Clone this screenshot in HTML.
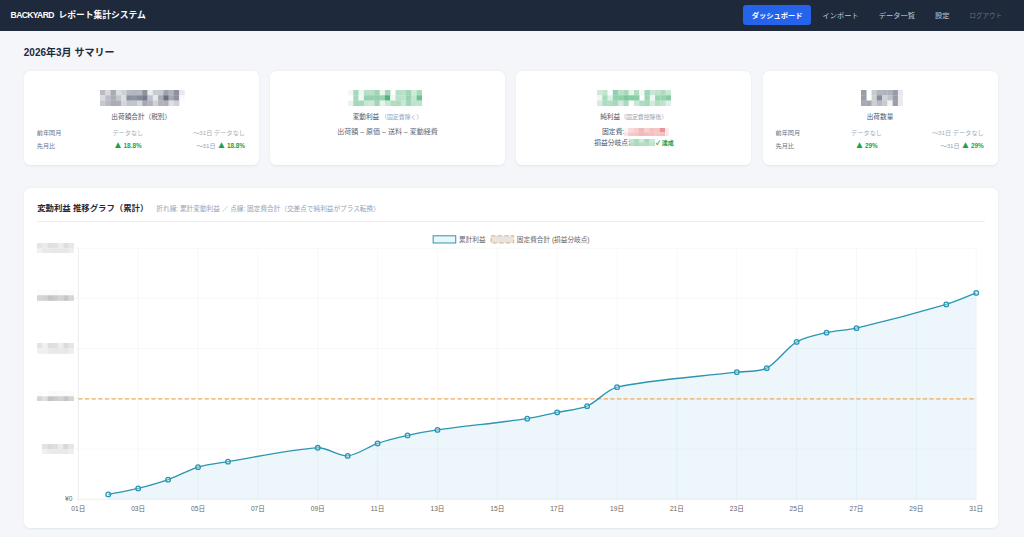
<!DOCTYPE html>
<html lang="ja">
<head>
<meta charset="utf-8">
<title>BACKYARD レポート集計システム</title>
<style>
*{box-sizing:border-box;margin:0;padding:0}
html,body{width:1024px;height:537px;overflow:hidden}
body{background:#f4f6fa;font-family:"Liberation Sans", "Noto Sans CJK JP", sans-serif;color:#1e293b;position:relative;-webkit-font-smoothing:antialiased}
.nav{position:absolute;left:0;top:0;width:1024px;height:30.5px;background:#1e293b}
.brand{position:absolute;left:10.6px;top:0;line-height:30.8px;font-size:8.75px;font-weight:700;color:#fff;white-space:nowrap}
.brand i{font-style:normal;font-size:8.6px;letter-spacing:-.65px;margin-right:2.2px}
.links{position:absolute;right:13.3px;top:4.6px;height:20.8px;display:flex;align-items:center;gap:2.65px}
.links a{display:block;height:20.8px;line-height:22.4px;padding:0 8.7px;font-size:7.25px;color:#bec8d5;text-decoration:none;border-radius:3px;white-space:nowrap}
.links a.on{background:#2563eb;color:#fff;font-weight:700;padding:0 8.6px}
.links a.out{font-size:6.5px;color:#64748b}
h1{position:absolute;left:23.8px;top:43.9px;font-size:10px;line-height:18px;font-weight:700;color:#1e293b;white-space:nowrap}
.card{position:absolute;top:70.6px;width:235px;height:94.6px;background:#fff;border-radius:6px;box-shadow:0 .8px 2.2px rgba(15,23,42,.075)}
.mz{position:absolute;display:block}
.lbl{position:absolute;left:0;width:100%;top:41.5px;text-align:center;font-size:6.65px;line-height:10px;color:#475569;white-space:nowrap}
.lbl small{font-size:5.9px;color:#94a3b8}
.row{position:absolute;left:13px;width:208.3px;display:grid;grid-template-columns:48px 1fr 1fr;column-gap:6px;font-size:6.2px;line-height:9px;white-space:nowrap}
.row > span:nth-child(1){color:#64748b}
.row > span:nth-child(2){text-align:center}
.row > span:nth-child(3){text-align:right}
.r1{top:57.4px} .r2{top:70px}
.mut{color:#a3acb9}
.up{color:#16a34a;font-weight:700;font-size:6.4px}
.up i{font-style:normal;font-size:10px;line-height:0;position:relative;top:-.1px;margin-right:-1.2px;margin-left:-1px}
.pre{color:#94a3b8;font-weight:400;font-size:6.2px}
.formula{position:absolute;left:0;width:100%;top:56.8px;text-align:center;font-size:7px;line-height:9px;color:#5b697d}
.kv{position:absolute;font-size:6.8px;line-height:10px;color:#475569;white-space:nowrap}
.ok{color:#16a34a;font-size:6px;font-weight:700}
.panel{position:absolute;left:23.75px;top:188.1px;width:974.25px;height:340px;background:#fff;border-radius:6px;box-shadow:0 .8px 2.2px rgba(15,23,42,.075);overflow:hidden}
.ph{position:absolute;left:13.4px;top:10.7px;height:14px;line-height:14px;white-space:nowrap}
.ph b{font-size:8.4px;color:#1e293b}
.ph span{font-size:6.65px;color:#94a3b8;margin-left:8px}
.hr{position:absolute;left:13.4px;right:13.4px;top:32.8px;height:.8px;background:#e9eef4}
.chart{position:absolute;left:0;top:0}
.chart .g{stroke:#f0f3f7;stroke-width:.6}
.chart .ax{stroke:#e6e9ee;stroke-width:.6}
.chart .tk{font-size:6.65px;fill:#666;font-family:"Liberation Sans", "Noto Sans CJK JP", sans-serif}
</style>
</head>
<body>
<div class="nav">
  <div class="brand"><i>BACKYARD</i> レポート集計システム</div>
  <div class="links">
    <a class="on">ダッシュボード</a><a>インポート</a><a>データ一覧</a><a>設定</a><a class="out">ログアウト</a>
  </div>
</div>
<h1>2026年3月 サマリー</h1>

<div class="card" style="left:23.75px">
  <svg class="mz" style="left:76.57px;top:19.16px" width="84.48" height="15.84" viewBox="0 0 84.48 15.84"><rect x="0.00" y="0.00" width="5.53" height="5.53" fill="#b9bcc4"/><rect x="5.28" y="0.00" width="5.53" height="5.53" fill="#d7d9de"/><rect x="10.56" y="0.00" width="5.53" height="5.53" fill="#a6aab4"/><rect x="15.84" y="0.00" width="5.53" height="5.53" fill="#dcdee3"/><rect x="21.12" y="0.00" width="5.53" height="5.53" fill="#cfd1d7"/><rect x="26.40" y="0.00" width="5.53" height="5.53" fill="#b5b8c1"/><rect x="31.68" y="0.00" width="5.53" height="5.53" fill="#b3b6bf"/><rect x="36.96" y="0.00" width="5.53" height="5.53" fill="#b5b8c0"/><rect x="42.24" y="0.00" width="5.53" height="5.53" fill="#8d929f"/><rect x="47.52" y="0.00" width="5.53" height="5.53" fill="#ececef"/><rect x="52.80" y="0.00" width="5.53" height="5.53" fill="#c9ccd2"/><rect x="58.08" y="0.00" width="5.53" height="5.53" fill="#c6c9cf"/><rect x="63.36" y="0.00" width="5.53" height="5.53" fill="#9da1ac"/><rect x="68.64" y="0.00" width="5.53" height="5.53" fill="#b0b3bc"/><rect x="73.92" y="0.00" width="5.53" height="5.53" fill="#8e929d"/><rect x="79.20" y="0.00" width="5.53" height="5.53" fill="#e8e9ec"/><rect x="0.00" y="5.28" width="5.53" height="5.53" fill="#d8dade"/><rect x="5.28" y="5.28" width="5.53" height="5.53" fill="#babdc5"/><rect x="10.56" y="5.28" width="5.53" height="5.53" fill="#a9adb6"/><rect x="15.84" y="5.28" width="5.53" height="5.53" fill="#c4c7cd"/><rect x="21.12" y="5.28" width="5.53" height="5.53" fill="#dcdee2"/><rect x="26.40" y="5.28" width="5.53" height="5.53" fill="#8a8f9c"/><rect x="31.68" y="5.28" width="5.53" height="5.53" fill="#8f94a0"/><rect x="36.96" y="5.28" width="5.53" height="5.53" fill="#858a98"/><rect x="42.24" y="5.28" width="5.53" height="5.53" fill="#747a89"/><rect x="47.52" y="5.28" width="5.53" height="5.53" fill="#bfc2c9"/><rect x="52.80" y="5.28" width="5.53" height="5.53" fill="#e6e7ea"/><rect x="58.08" y="5.28" width="5.53" height="5.53" fill="#a8acb5"/><rect x="63.36" y="5.28" width="5.53" height="5.53" fill="#6a7080"/><rect x="68.64" y="5.28" width="5.53" height="5.53" fill="#a4a8b1"/><rect x="73.92" y="5.28" width="5.53" height="5.53" fill="#8e929d"/><rect x="79.20" y="5.28" width="5.53" height="5.53" fill="#fafafa"/><rect x="0.00" y="10.56" width="5.53" height="5.53" fill="#c5c8ce"/><rect x="5.28" y="10.56" width="5.53" height="5.53" fill="#b6b9c1"/><rect x="10.56" y="10.56" width="5.53" height="5.53" fill="#a8acb5"/><rect x="15.84" y="10.56" width="5.53" height="5.53" fill="#abafb8"/><rect x="21.12" y="10.56" width="5.53" height="5.53" fill="#d2d4d9"/><rect x="26.40" y="10.56" width="5.53" height="5.53" fill="#c0c3ca"/><rect x="31.68" y="10.56" width="5.53" height="5.53" fill="#c2c5cb"/><rect x="36.96" y="10.56" width="5.53" height="5.53" fill="#d5d8db"/><rect x="42.24" y="10.56" width="5.53" height="5.53" fill="#a5a9b3"/><rect x="47.52" y="10.56" width="5.53" height="5.53" fill="#b0b4bc"/><rect x="52.80" y="10.56" width="5.53" height="5.53" fill="#cfd1d6"/><rect x="58.08" y="10.56" width="5.53" height="5.53" fill="#b0b3bc"/><rect x="63.36" y="10.56" width="5.53" height="5.53" fill="#acb0b9"/><rect x="68.64" y="10.56" width="5.53" height="5.53" fill="#dddfe3"/><rect x="73.92" y="10.56" width="5.53" height="5.53" fill="#cfd1d6"/></svg>
  <div class="lbl">出荷額合計（税別）</div>
  <div class="row r1"><span>前年同月</span><span class="mut">データなし</span><span class="mut">～31日 データなし</span></div>
  <div class="row r2"><span>先月比</span><span class="up"><i>▲</i> 18.8%</span><span class="up"><span class="pre">～31日</span> <i>▲</i> 18.8%</span></div>
</div>

<div class="card" style="left:270px">
  <svg class="mz" style="left:78.48px;top:19.16px" width="73.92" height="15.84" viewBox="0 0 73.92 15.84"><rect x="0.00" y="0.00" width="5.53" height="5.53" fill="#f0f8f3"/><rect x="5.28" y="0.00" width="5.53" height="5.53" fill="#a5d9bb"/><rect x="10.56" y="0.00" width="5.53" height="5.53" fill="#eef8f2"/><rect x="15.84" y="0.00" width="5.53" height="5.53" fill="#b5e0c6"/><rect x="21.12" y="0.00" width="5.53" height="5.53" fill="#b5e0c6"/><rect x="26.40" y="0.00" width="5.53" height="5.53" fill="#9ed5b5"/><rect x="31.68" y="0.00" width="5.53" height="5.53" fill="#e8f5ed"/><rect x="36.96" y="0.00" width="5.53" height="5.53" fill="#a0d6b7"/><rect x="47.52" y="0.00" width="5.53" height="5.53" fill="#b5e0c6"/><rect x="52.80" y="0.00" width="5.53" height="5.53" fill="#b8e1c9"/><rect x="58.08" y="0.00" width="5.53" height="5.53" fill="#a0d6b7"/><rect x="63.36" y="0.00" width="5.53" height="5.53" fill="#cdeada"/><rect x="68.64" y="0.00" width="5.53" height="5.53" fill="#a8dabd"/><rect x="5.28" y="5.28" width="5.53" height="5.53" fill="#a5d9bb"/><rect x="10.56" y="5.28" width="5.53" height="5.53" fill="#f2f9f5"/><rect x="15.84" y="5.28" width="5.53" height="5.53" fill="#95d1ae"/><rect x="21.12" y="5.28" width="5.53" height="5.53" fill="#95d1ae"/><rect x="26.40" y="5.28" width="5.53" height="5.53" fill="#92d0ac"/><rect x="31.68" y="5.28" width="5.53" height="5.53" fill="#98d2b0"/><rect x="36.96" y="5.28" width="5.53" height="5.53" fill="#4db47a"/><rect x="42.24" y="5.28" width="5.53" height="5.53" fill="#f2f9f5"/><rect x="47.52" y="5.28" width="5.53" height="5.53" fill="#b9e2c9"/><rect x="52.80" y="5.28" width="5.53" height="5.53" fill="#bde3cc"/><rect x="58.08" y="5.28" width="5.53" height="5.53" fill="#9ad3b2"/><rect x="63.36" y="5.28" width="5.53" height="5.53" fill="#c2e5d0"/><rect x="68.64" y="5.28" width="5.53" height="5.53" fill="#6cc190"/><rect x="0.00" y="10.56" width="5.53" height="5.53" fill="#e6f4ec"/><rect x="5.28" y="10.56" width="5.53" height="5.53" fill="#a2d7b8"/><rect x="10.56" y="10.56" width="5.53" height="5.53" fill="#a5d9bb"/><rect x="15.84" y="10.56" width="5.53" height="5.53" fill="#c4e6d2"/><rect x="21.12" y="10.56" width="5.53" height="5.53" fill="#cbe9d7"/><rect x="26.40" y="10.56" width="5.53" height="5.53" fill="#a0d6b7"/><rect x="31.68" y="10.56" width="5.53" height="5.53" fill="#e6f4ec"/><rect x="36.96" y="10.56" width="5.53" height="5.53" fill="#c8e8d5"/><rect x="42.24" y="10.56" width="5.53" height="5.53" fill="#b0debf"/><rect x="47.52" y="10.56" width="5.53" height="5.53" fill="#aedcc1"/><rect x="52.80" y="10.56" width="5.53" height="5.53" fill="#c8e8d5"/><rect x="58.08" y="10.56" width="5.53" height="5.53" fill="#a0d6b7"/><rect x="63.36" y="10.56" width="5.53" height="5.53" fill="#bde3cc"/><rect x="68.64" y="10.56" width="5.53" height="5.53" fill="#bfe4cd"/></svg>
  <div class="lbl">変動利益 <small>（固定費除く）</small></div>
  <div class="formula">出荷額 – 原価 – 送料 – 変動経費</div>
</div>

<div class="card" style="left:516.25px">
  <svg class="mz" style="left:80.39px;top:19.16px" width="73.92" height="15.84" viewBox="0 0 73.92 15.84"><rect x="0.00" y="0.00" width="5.53" height="5.53" fill="#cdeada"/><rect x="5.28" y="0.00" width="5.53" height="5.53" fill="#c0e5cf"/><rect x="10.56" y="0.00" width="5.53" height="5.53" fill="#f7fbf9"/><rect x="15.84" y="0.00" width="5.53" height="5.53" fill="#92d0ac"/><rect x="21.12" y="0.00" width="5.53" height="5.53" fill="#b8e1c9"/><rect x="26.40" y="0.00" width="5.53" height="5.53" fill="#a5d9bb"/><rect x="31.68" y="0.00" width="5.53" height="5.53" fill="#e6f4ec"/><rect x="36.96" y="0.00" width="5.53" height="5.53" fill="#b0debf"/><rect x="42.24" y="0.00" width="5.53" height="5.53" fill="#f2f9f5"/><rect x="47.52" y="0.00" width="5.53" height="5.53" fill="#9ed5b5"/><rect x="52.80" y="0.00" width="5.53" height="5.53" fill="#c8e8d5"/><rect x="58.08" y="0.00" width="5.53" height="5.53" fill="#bde3cc"/><rect x="63.36" y="0.00" width="5.53" height="5.53" fill="#aedcc1"/><rect x="68.64" y="0.00" width="5.53" height="5.53" fill="#c8e8d5"/><rect x="0.00" y="5.28" width="5.53" height="5.53" fill="#f0f8f3"/><rect x="5.28" y="5.28" width="5.53" height="5.53" fill="#a8dabd"/><rect x="10.56" y="5.28" width="5.53" height="5.53" fill="#dcf0e5"/><rect x="15.84" y="5.28" width="5.53" height="5.53" fill="#95d1ae"/><rect x="21.12" y="5.28" width="5.53" height="5.53" fill="#8fcfaa"/><rect x="26.40" y="5.28" width="5.53" height="5.53" fill="#7fc89e"/><rect x="31.68" y="5.28" width="5.53" height="5.53" fill="#88cca5"/><rect x="36.96" y="5.28" width="5.53" height="5.53" fill="#8acda6"/><rect x="47.52" y="5.28" width="5.53" height="5.53" fill="#9ed5b5"/><rect x="52.80" y="5.28" width="5.53" height="5.53" fill="#eef8f2"/><rect x="58.08" y="5.28" width="5.53" height="5.53" fill="#9ad3b2"/><rect x="63.36" y="5.28" width="5.53" height="5.53" fill="#98d2b0"/><rect x="68.64" y="5.28" width="5.53" height="5.53" fill="#88cca5"/><rect x="0.00" y="10.56" width="5.53" height="5.53" fill="#d4ecdf"/><rect x="5.28" y="10.56" width="5.53" height="5.53" fill="#aedcc1"/><rect x="10.56" y="10.56" width="5.53" height="5.53" fill="#b2dec4"/><rect x="15.84" y="10.56" width="5.53" height="5.53" fill="#a5d9bb"/><rect x="21.12" y="10.56" width="5.53" height="5.53" fill="#d0ebdc"/><rect x="26.40" y="10.56" width="5.53" height="5.53" fill="#a8dabd"/><rect x="31.68" y="10.56" width="5.53" height="5.53" fill="#fafdfb"/><rect x="36.96" y="10.56" width="5.53" height="5.53" fill="#c8e8d5"/><rect x="42.24" y="10.56" width="5.53" height="5.53" fill="#aedcc1"/><rect x="47.52" y="10.56" width="5.53" height="5.53" fill="#a5d9bb"/><rect x="52.80" y="10.56" width="5.53" height="5.53" fill="#d0ebdc"/><rect x="58.08" y="10.56" width="5.53" height="5.53" fill="#b0debf"/><rect x="63.36" y="10.56" width="5.53" height="5.53" fill="#bde3cc"/><rect x="68.64" y="10.56" width="5.53" height="5.53" fill="#dcf0e5"/></svg>
  <div class="lbl">純利益<small>（固定費控除後）</small></div>
  <svg class="mz" style="left:107.95px;top:57.10px" width="44.40" height="8.00" viewBox="0 0 44.40 8.00"><rect x="0.00" y="0.00" width="4.35" height="4.55" fill="#fdf5f5"/><rect x="4.10" y="0.00" width="5.55" height="4.55" fill="#f9d9da"/><rect x="9.40" y="0.00" width="5.55" height="4.55" fill="#f7cfd0"/><rect x="14.70" y="0.00" width="5.55" height="4.55" fill="#f2b9bb"/><rect x="20.00" y="0.00" width="5.45" height="4.55" fill="#f7d2d3"/><rect x="25.20" y="0.00" width="5.55" height="4.55" fill="#f3bfc1"/><rect x="30.50" y="0.00" width="5.55" height="4.55" fill="#f5c6c8"/><rect x="35.80" y="0.00" width="5.55" height="4.55" fill="#ea9497"/><rect x="41.10" y="0.00" width="3.55" height="4.55" fill="#fbe9e9"/><rect x="0.00" y="4.30" width="4.35" height="3.95" fill="#fbe6e7"/><rect x="4.10" y="4.30" width="5.55" height="3.95" fill="#f6c8ca"/><rect x="9.40" y="4.30" width="5.55" height="3.95" fill="#f5c4c6"/><rect x="14.70" y="4.30" width="5.55" height="3.95" fill="#f2b9bb"/><rect x="20.00" y="4.30" width="5.45" height="3.95" fill="#f3bdbf"/><rect x="25.20" y="4.30" width="5.55" height="3.95" fill="#f3bfc1"/><rect x="30.50" y="4.30" width="5.55" height="3.95" fill="#f5c6c8"/><rect x="35.80" y="4.30" width="5.55" height="3.95" fill="#f4c1c3"/><rect x="41.10" y="4.30" width="3.55" height="3.95" fill="#fae3e4"/></svg>
  <svg class="mz" style="left:112.75px;top:68.40px" width="25.80" height="7.40" viewBox="0 0 25.80 7.40"><rect x="0.00" y="0.00" width="4.85" height="3.85" fill="#c5e6d2"/><rect x="4.60" y="0.00" width="5.55" height="3.85" fill="#a8dabd"/><rect x="9.90" y="0.00" width="5.55" height="3.85" fill="#cdeada"/><rect x="15.20" y="0.00" width="5.45" height="3.85" fill="#a5d9bb"/><rect x="20.40" y="0.00" width="5.65" height="3.85" fill="#c8e8d5"/><rect x="0.00" y="3.60" width="4.85" height="4.05" fill="#b5e0c6"/><rect x="4.60" y="3.60" width="5.55" height="4.05" fill="#a8dabd"/><rect x="9.90" y="3.60" width="5.55" height="4.05" fill="#b0debf"/><rect x="15.20" y="3.60" width="5.45" height="4.05" fill="#b0debf"/><rect x="20.40" y="3.60" width="5.65" height="4.05" fill="#bde3cc"/></svg>
  <div class="kv" style="left:85.8px;top:56.2px">固定費:</div>
  <div class="kv" style="left:77.9px;top:67.4px">損益分岐点:</div>
  <div class="kv ok" style="left:139.6px;top:67.4px">✓ 達成</div>
</div>

<div class="card" style="left:762.5px">
  <svg class="mz" style="left:98.14px;top:19.16px" width="42.24" height="15.84" viewBox="0 0 42.24 15.84"><rect x="0.00" y="0.00" width="5.53" height="5.53" fill="#9a9eaa"/><rect x="10.56" y="0.00" width="5.53" height="5.53" fill="#c8cad1"/><rect x="15.84" y="0.00" width="5.53" height="5.53" fill="#b3b6bf"/><rect x="21.12" y="0.00" width="5.53" height="5.53" fill="#b0b3bc"/><rect x="26.40" y="0.00" width="5.53" height="5.53" fill="#aeb1bb"/><rect x="31.68" y="0.00" width="5.53" height="5.53" fill="#989ca8"/><rect x="36.96" y="0.00" width="5.53" height="5.53" fill="#e8e9ec"/><rect x="0.00" y="5.28" width="5.53" height="5.53" fill="#9a9eaa"/><rect x="10.56" y="5.28" width="5.53" height="5.53" fill="#cdcfd5"/><rect x="15.84" y="5.28" width="5.53" height="5.53" fill="#868b98"/><rect x="21.12" y="5.28" width="5.53" height="5.53" fill="#d0d2d7"/><rect x="26.40" y="5.28" width="5.53" height="5.53" fill="#c0c3ca"/><rect x="31.68" y="5.28" width="5.53" height="5.53" fill="#989ca8"/><rect x="36.96" y="5.28" width="5.53" height="5.53" fill="#ebecee"/><rect x="0.00" y="10.56" width="5.53" height="5.53" fill="#a5a9b3"/><rect x="5.28" y="10.56" width="5.53" height="5.53" fill="#a2a6b0"/><rect x="10.56" y="10.56" width="5.53" height="5.53" fill="#cbcdd3"/><rect x="15.84" y="10.56" width="5.53" height="5.53" fill="#b8bbc3"/><rect x="21.12" y="10.56" width="5.53" height="5.53" fill="#c8cad1"/><rect x="26.40" y="10.56" width="5.53" height="5.53" fill="#f2f3f5"/><rect x="31.68" y="10.56" width="5.53" height="5.53" fill="#9a9eaa"/><rect x="36.96" y="10.56" width="5.53" height="5.53" fill="#ebecee"/></svg>
  <div class="lbl">出荷数量</div>
  <div class="row r1"><span>前年同月</span><span class="mut">データなし</span><span class="mut">～31日 データなし</span></div>
  <div class="row r2"><span>先月比</span><span class="up"><i>▲</i> 29%</span><span class="up"><span class="pre">～31日</span> <i>▲</i> 29%</span></div>
</div>

<div class="panel">
  <div class="ph"><b>変動利益 推移グラフ（累計）</b><span>折れ線: 累計変動利益 ／ 点線: 固定費合計（交差点で純利益がプラス転換）</span></div>
  <div class="hr"></div>
  <svg class="chart" width="974.25" height="340" viewBox="23.75 188.1 974.25 340">
<line x1="74.07" y1="248.30" x2="976.0" y2="248.30" class="g"/>
<line x1="74.07" y1="298.52" x2="976.0" y2="298.52" class="g"/>
<line x1="74.07" y1="348.74" x2="976.0" y2="348.74" class="g"/>
<line x1="74.07" y1="398.96" x2="976.0" y2="398.96" class="g"/>
<line x1="74.07" y1="449.18" x2="976.0" y2="449.18" class="g"/>
<line x1="74.07" y1="499.40" x2="976.0" y2="499.40" class="g"/>
<line x1="78.07" y1="248.3" x2="78.07" y2="503.4" class="g"/>
<line x1="137.93" y1="248.3" x2="137.93" y2="503.4" class="g"/>
<line x1="197.79" y1="248.3" x2="197.79" y2="503.4" class="g"/>
<line x1="257.65" y1="248.3" x2="257.65" y2="503.4" class="g"/>
<line x1="317.51" y1="248.3" x2="317.51" y2="503.4" class="g"/>
<line x1="377.37" y1="248.3" x2="377.37" y2="503.4" class="g"/>
<line x1="437.23" y1="248.3" x2="437.23" y2="503.4" class="g"/>
<line x1="497.09" y1="248.3" x2="497.09" y2="503.4" class="g"/>
<line x1="556.95" y1="248.3" x2="556.95" y2="503.4" class="g"/>
<line x1="616.81" y1="248.3" x2="616.81" y2="503.4" class="g"/>
<line x1="676.67" y1="248.3" x2="676.67" y2="503.4" class="g"/>
<line x1="736.53" y1="248.3" x2="736.53" y2="503.4" class="g"/>
<line x1="796.39" y1="248.3" x2="796.39" y2="503.4" class="g"/>
<line x1="856.25" y1="248.3" x2="856.25" y2="503.4" class="g"/>
<line x1="916.11" y1="248.3" x2="916.11" y2="503.4" class="g"/>
<line x1="975.97" y1="248.3" x2="975.97" y2="503.4" class="g"/>
<line x1="78.07" y1="248.3" x2="78.07" y2="499.4" class="ax"/>
<line x1="78.07" y1="499.4" x2="976.0" y2="499.4" class="ax"/>
<path d="M108.00,494.50 C116.98,492.70 129.05,490.69 137.93,488.50 C147.00,486.26 159.06,482.87 167.86,479.75 C177.02,476.50 188.52,470.04 197.79,467.25 C206.48,464.64 218.71,463.21 227.72,461.75 C254.62,457.40 290.73,449.19 317.51,447.90 C326.65,447.46 338.66,456.65 347.44,456.00 C356.62,455.33 368.19,446.65 377.37,443.50 C386.14,440.50 398.24,437.54 407.30,435.50 C416.20,433.49 428.19,431.26 437.23,430.00 C464.11,426.24 500.17,422.67 527.02,418.75 C536.09,417.42 547.97,414.38 556.95,412.50 C565.93,410.62 578.56,409.76 586.88,406.25 C596.52,402.18 606.61,389.57 616.81,387.25 C651.51,379.37 700.62,376.81 736.53,372.25 C745.52,371.11 758.71,372.16 766.46,368.25 C776.67,363.09 786.34,347.96 796.39,342.00 C804.30,337.31 817.19,334.85 826.32,332.75 C835.14,330.72 847.42,330.33 856.25,328.25 C883.34,321.86 919.34,312.36 946.04,304.50 C955.26,301.79 966.99,296.45 975.97,293.00 L975.97,499.4 L108.00,499.4 Z" fill="rgba(10,135,185,0.075)"/>
<line x1="78.07" y1="398.9" x2="976.0" y2="398.9" stroke="#f0ac58" stroke-width="1.25" stroke-dasharray="4.2 2.45"/>
<path d="M108.00,494.50 C116.98,492.70 129.05,490.69 137.93,488.50 C147.00,486.26 159.06,482.87 167.86,479.75 C177.02,476.50 188.52,470.04 197.79,467.25 C206.48,464.64 218.71,463.21 227.72,461.75 C254.62,457.40 290.73,449.19 317.51,447.90 C326.65,447.46 338.66,456.65 347.44,456.00 C356.62,455.33 368.19,446.65 377.37,443.50 C386.14,440.50 398.24,437.54 407.30,435.50 C416.20,433.49 428.19,431.26 437.23,430.00 C464.11,426.24 500.17,422.67 527.02,418.75 C536.09,417.42 547.97,414.38 556.95,412.50 C565.93,410.62 578.56,409.76 586.88,406.25 C596.52,402.18 606.61,389.57 616.81,387.25 C651.51,379.37 700.62,376.81 736.53,372.25 C745.52,371.11 758.71,372.16 766.46,368.25 C776.67,363.09 786.34,347.96 796.39,342.00 C804.30,337.31 817.19,334.85 826.32,332.75 C835.14,330.72 847.42,330.33 856.25,328.25 C883.34,321.86 919.34,312.36 946.04,304.50 C955.26,301.79 966.99,296.45 975.97,293.00" fill="none" stroke="#2a96b4" stroke-width="1.35" stroke-linejoin="round"/>
<circle cx="108.00" cy="494.50" r="2.3" fill="rgba(235,246,249,0.3)" stroke="#2a96b4" stroke-width="1.3"/>
<circle cx="137.93" cy="488.50" r="2.3" fill="rgba(235,246,249,0.3)" stroke="#2a96b4" stroke-width="1.3"/>
<circle cx="167.86" cy="479.75" r="2.3" fill="rgba(235,246,249,0.3)" stroke="#2a96b4" stroke-width="1.3"/>
<circle cx="197.79" cy="467.25" r="2.3" fill="rgba(235,246,249,0.3)" stroke="#2a96b4" stroke-width="1.3"/>
<circle cx="227.72" cy="461.75" r="2.3" fill="rgba(235,246,249,0.3)" stroke="#2a96b4" stroke-width="1.3"/>
<circle cx="317.51" cy="447.90" r="2.3" fill="rgba(235,246,249,0.3)" stroke="#2a96b4" stroke-width="1.3"/>
<circle cx="347.44" cy="456.00" r="2.3" fill="rgba(235,246,249,0.3)" stroke="#2a96b4" stroke-width="1.3"/>
<circle cx="377.37" cy="443.50" r="2.3" fill="rgba(235,246,249,0.3)" stroke="#2a96b4" stroke-width="1.3"/>
<circle cx="407.30" cy="435.50" r="2.3" fill="rgba(235,246,249,0.3)" stroke="#2a96b4" stroke-width="1.3"/>
<circle cx="437.23" cy="430.00" r="2.3" fill="rgba(235,246,249,0.3)" stroke="#2a96b4" stroke-width="1.3"/>
<circle cx="527.02" cy="418.75" r="2.3" fill="rgba(235,246,249,0.3)" stroke="#2a96b4" stroke-width="1.3"/>
<circle cx="556.95" cy="412.50" r="2.3" fill="rgba(235,246,249,0.3)" stroke="#2a96b4" stroke-width="1.3"/>
<circle cx="586.88" cy="406.25" r="2.3" fill="rgba(235,246,249,0.3)" stroke="#2a96b4" stroke-width="1.3"/>
<circle cx="616.81" cy="387.25" r="2.3" fill="rgba(235,246,249,0.3)" stroke="#2a96b4" stroke-width="1.3"/>
<circle cx="736.53" cy="372.25" r="2.3" fill="rgba(235,246,249,0.3)" stroke="#2a96b4" stroke-width="1.3"/>
<circle cx="766.46" cy="368.25" r="2.3" fill="rgba(235,246,249,0.3)" stroke="#2a96b4" stroke-width="1.3"/>
<circle cx="796.39" cy="342.00" r="2.3" fill="rgba(235,246,249,0.3)" stroke="#2a96b4" stroke-width="1.3"/>
<circle cx="826.32" cy="332.75" r="2.3" fill="rgba(235,246,249,0.3)" stroke="#2a96b4" stroke-width="1.3"/>
<circle cx="856.25" cy="328.25" r="2.3" fill="rgba(235,246,249,0.3)" stroke="#2a96b4" stroke-width="1.3"/>
<circle cx="946.04" cy="304.50" r="2.3" fill="rgba(235,246,249,0.3)" stroke="#2a96b4" stroke-width="1.3"/>
<circle cx="975.97" cy="293.00" r="2.3" fill="rgba(235,246,249,0.3)" stroke="#2a96b4" stroke-width="1.3"/>
<text x="78.07" y="511.4" class="tk" text-anchor="middle">01日</text>
<text x="137.93" y="511.4" class="tk" text-anchor="middle">03日</text>
<text x="197.79" y="511.4" class="tk" text-anchor="middle">05日</text>
<text x="257.65" y="511.4" class="tk" text-anchor="middle">07日</text>
<text x="317.51" y="511.4" class="tk" text-anchor="middle">09日</text>
<text x="377.37" y="511.4" class="tk" text-anchor="middle">11日</text>
<text x="437.23" y="511.4" class="tk" text-anchor="middle">13日</text>
<text x="497.09" y="511.4" class="tk" text-anchor="middle">15日</text>
<text x="556.95" y="511.4" class="tk" text-anchor="middle">17日</text>
<text x="616.81" y="511.4" class="tk" text-anchor="middle">19日</text>
<text x="676.67" y="511.4" class="tk" text-anchor="middle">21日</text>
<text x="736.53" y="511.4" class="tk" text-anchor="middle">23日</text>
<text x="796.39" y="511.4" class="tk" text-anchor="middle">25日</text>
<text x="856.25" y="511.4" class="tk" text-anchor="middle">27日</text>
<text x="916.11" y="511.4" class="tk" text-anchor="middle">29日</text>
<text x="975.97" y="511.4" class="tk" text-anchor="middle">31日</text>
<text x="72.2" y="501.2" class="tk" text-anchor="end">¥0</text>
<rect x="432.9" y="235.9" width="22.6" height="7.2" fill="#ecf5f8" stroke="#2a96b4" stroke-width="1"/>
<text x="458.8" y="241.9" class="tk">累計利益</text>
<rect x="490.8" y="235.9" width="22.6" height="7.2" fill="#e5e5e5" stroke="#f0ac58" stroke-width="1" stroke-dasharray="4.2 2.45"/>
<text x="516.6" y="241.9" class="tk">固定費合計 (損益分岐点)</text>
</svg>
  <svg class="mz" style="left:13.21px;top:54.78px" width="36.96" height="10.56" viewBox="0 0 36.96 10.56"><rect x="0.00" y="0.00" width="5.53" height="5.53" fill="#e4e4e4"/><rect x="5.28" y="0.00" width="5.53" height="5.53" fill="#ebebeb"/><rect x="10.56" y="0.00" width="5.53" height="5.53" fill="#e0e0e0"/><rect x="15.84" y="0.00" width="5.53" height="5.53" fill="#e2e2e2"/><rect x="21.12" y="0.00" width="5.53" height="5.53" fill="#ececec"/><rect x="26.40" y="0.00" width="5.53" height="5.53" fill="#dedede"/><rect x="31.68" y="0.00" width="5.53" height="5.53" fill="#e8e8e8"/><rect x="0.00" y="5.28" width="5.53" height="5.53" fill="#f0f0f0"/><rect x="5.28" y="5.28" width="5.53" height="5.53" fill="#e8e8e8"/><rect x="10.56" y="5.28" width="5.53" height="5.53" fill="#e9e9e9"/><rect x="15.84" y="5.28" width="5.53" height="5.53" fill="#e7e7e7"/><rect x="21.12" y="5.28" width="5.53" height="5.53" fill="#e8e8e8"/><rect x="26.40" y="5.28" width="5.53" height="5.53" fill="#e7e7e7"/><rect x="31.68" y="5.28" width="5.53" height="5.53" fill="#eeeeee"/></svg><svg class="mz" style="left:13.21px;top:102.30px" width="36.96" height="10.56" viewBox="0 0 36.96 10.56"><rect x="0.00" y="0.00" width="5.53" height="5.53" fill="#fbfbfb"/><rect x="5.28" y="0.00" width="5.53" height="5.53" fill="#fbfbfb"/><rect x="10.56" y="0.00" width="5.53" height="5.53" fill="#fbfbfb"/><rect x="15.84" y="0.00" width="5.53" height="5.53" fill="#f9f9f9"/><rect x="21.12" y="0.00" width="5.53" height="5.53" fill="#fbfbfb"/><rect x="26.40" y="0.00" width="5.53" height="5.53" fill="#fbfbfb"/><rect x="31.68" y="0.00" width="5.53" height="5.53" fill="#fbfbfb"/><rect x="0.00" y="5.28" width="5.53" height="5.53" fill="#d4d4d4"/><rect x="5.28" y="5.28" width="5.53" height="5.53" fill="#d0d0d0"/><rect x="10.56" y="5.28" width="5.53" height="5.53" fill="#c4c4c4"/><rect x="15.84" y="5.28" width="5.53" height="5.53" fill="#cbcbcb"/><rect x="21.12" y="5.28" width="5.53" height="5.53" fill="#d2d2d2"/><rect x="26.40" y="5.28" width="5.53" height="5.53" fill="#c6c6c6"/><rect x="31.68" y="5.28" width="5.53" height="5.53" fill="#d6d6d6"/></svg><svg class="mz" style="left:13.21px;top:155.10px" width="36.96" height="10.56" viewBox="0 0 36.96 10.56"><rect x="0.00" y="0.00" width="5.53" height="5.53" fill="#e3e3e3"/><rect x="5.28" y="0.00" width="5.53" height="5.53" fill="#f0f0f0"/><rect x="10.56" y="0.00" width="5.53" height="5.53" fill="#dedede"/><rect x="15.84" y="0.00" width="5.53" height="5.53" fill="#e0e0e0"/><rect x="21.12" y="0.00" width="5.53" height="5.53" fill="#ededed"/><rect x="26.40" y="0.00" width="5.53" height="5.53" fill="#dcdcdc"/><rect x="31.68" y="0.00" width="5.53" height="5.53" fill="#e6e6e6"/><rect x="0.00" y="5.28" width="5.53" height="5.53" fill="#f0f0f0"/><rect x="5.28" y="5.28" width="5.53" height="5.53" fill="#efefef"/><rect x="10.56" y="5.28" width="5.53" height="5.53" fill="#e9e9e9"/><rect x="15.84" y="5.28" width="5.53" height="5.53" fill="#e8e8e8"/><rect x="21.12" y="5.28" width="5.53" height="5.53" fill="#e9e9e9"/><rect x="26.40" y="5.28" width="5.53" height="5.53" fill="#e7e7e7"/><rect x="31.68" y="5.28" width="5.53" height="5.53" fill="#ededed"/></svg><svg class="mz" style="left:13.21px;top:202.62px" width="36.96" height="10.56" viewBox="0 0 36.96 10.56"><rect x="0.00" y="0.00" width="5.53" height="5.53" fill="#fbfbfb"/><rect x="10.56" y="0.00" width="5.53" height="5.53" fill="#fbfbfb"/><rect x="15.84" y="0.00" width="5.53" height="5.53" fill="#f9f9f9"/><rect x="21.12" y="0.00" width="5.53" height="5.53" fill="#fbfbfb"/><rect x="26.40" y="0.00" width="5.53" height="5.53" fill="#fbfbfb"/><rect x="31.68" y="0.00" width="5.53" height="5.53" fill="#fbfbfb"/><rect x="0.00" y="5.28" width="5.53" height="5.53" fill="#d4d4d4"/><rect x="5.28" y="5.28" width="5.53" height="5.53" fill="#e0e0e0"/><rect x="10.56" y="5.28" width="5.53" height="5.53" fill="#c4c4c4"/><rect x="15.84" y="5.28" width="5.53" height="5.53" fill="#cbcbcb"/><rect x="21.12" y="5.28" width="5.53" height="5.53" fill="#d2d2d2"/><rect x="26.40" y="5.28" width="5.53" height="5.53" fill="#c5c5c5"/><rect x="31.68" y="5.28" width="5.53" height="5.53" fill="#d4d4d4"/></svg><svg class="mz" style="left:18.49px;top:255.42px" width="31.68" height="10.56" viewBox="0 0 31.68 10.56"><rect x="0.00" y="0.00" width="5.53" height="5.53" fill="#e2e2e2"/><rect x="5.28" y="0.00" width="5.53" height="5.53" fill="#dadada"/><rect x="10.56" y="0.00" width="5.53" height="5.53" fill="#dfdfdf"/><rect x="15.84" y="0.00" width="5.53" height="5.53" fill="#ebebeb"/><rect x="21.12" y="0.00" width="5.53" height="5.53" fill="#d9d9d9"/><rect x="26.40" y="0.00" width="5.53" height="5.53" fill="#e6e6e6"/><rect x="0.00" y="5.28" width="5.53" height="5.53" fill="#f0f0f0"/><rect x="5.28" y="5.28" width="5.53" height="5.53" fill="#ebebeb"/><rect x="10.56" y="5.28" width="5.53" height="5.53" fill="#e9e9e9"/><rect x="15.84" y="5.28" width="5.53" height="5.53" fill="#e9e9e9"/><rect x="21.12" y="5.28" width="5.53" height="5.53" fill="#e8e8e8"/><rect x="26.40" y="5.28" width="5.53" height="5.53" fill="#eeeeee"/></svg>
</div>
</body>
</html>
